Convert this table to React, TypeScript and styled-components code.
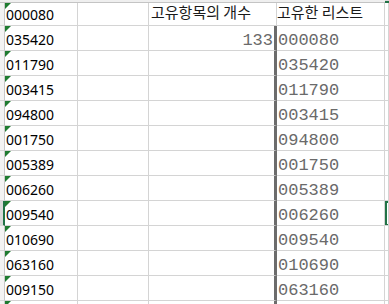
import * as React from 'react';
import styled, {createGlobalStyle, css} from 'styled-components';

const GRID = '#d4d4d4';
const ACTIVE = '#217346';
const COLUMNS = '5px 73px 71px 128px 108px 1fr';

const codes = [
    '000080', '035420', '011790', '003415', '094800', '001750',
    '005389', '006260', '009540', '010690', '063160', '009150',
];
const ACTIVE_ROW = 9;

export default function App() {
    return (
        <>
            <GlobalStyle/>
            <Sheet>
                <HeaderStrip>
                    <StripCell/>
                    <StripCell/>
                    <StripCell/>
                    <StripCell/>
                    <StripCell/>
                    <StripCell $active/>
                </HeaderStrip>
                {codes.map((code, i) => {
                    const rowNo = i + 1;
                    const first = rowNo === 1;
                    return (
                        <Row key={code} $height={first ? 23 : 25}>
                            <RowStub $active={rowNo === ACTIVE_ROW}/>
                            <TextCell>{code}</TextCell>
                            <Cell/>
                            {first
                                ? <HeaderCell>고유항목의 개수</HeaderCell>
                                : <CountCell $thick>{rowNo === 2 ? '133' : ''}</CountCell>}
                            {first
                                ? <HeaderCell $tight>고유한 리스트</HeaderCell>
                                : <MonoCell>{codes[i - 1]}</MonoCell>}
                            <Cell $selected={rowNo === ACTIVE_ROW}/>
                        </Row>
                    );
                })}
                {/* next row, only its top edge is in view */}
                <Row $height={25}>
                    <RowStub/>
                    <TextCell/>
                    <Cell/>
                    <Cell $thick/>
                    <Cell/>
                    <Cell/>
                </Row>
            </Sheet>
        </>
    );
}

const GlobalStyle = createGlobalStyle`
  html, body {
    margin: 0;
    padding: 0;
    background: #ffffff;
    overflow: hidden;
  }
`;

const Sheet = styled.div`
  width: 389px;
  height: 304px;
  overflow: hidden;
  background: #ffffff;
  font-family: "Noto Sans", "Noto Sans CJK KR", sans-serif;
  color: #000000;
`;

const HeaderStrip = styled.div`
  display: grid;
  grid-template-columns: ${COLUMNS};
  height: 3px;
`;

const StripCell = styled.div<{ $active?: boolean }>`
  box-sizing: border-box;
  background: #efefef;
  border-bottom: 1px solid #c4c4c4;
  ${p => p.$active && css`
    background: #d9d9d9;
    border-bottom: 2px solid ${ACTIVE};
  `}
`;

const Row = styled.div<{ $height: number }>`
  display: grid;
  grid-template-columns: ${COLUMNS};
  height: ${p => p.$height}px;
`;

const RowStub = styled.div<{ $active?: boolean }>`
  box-sizing: border-box;
  background: #f3f3f3;
  border-right: 1px solid #c8c8c8;
  border-bottom: 1px solid #d8d8d8;
  ${p => p.$active && css`
    background: #d9d9d9;
    border-right: 2px solid ${ACTIVE};
  `}
`;

const Cell = styled.div<{ $thick?: boolean; $selected?: boolean }>`
  position: relative;
  box-sizing: border-box;
  display: flex;
  align-items: flex-end;
  min-width: 0;
  white-space: nowrap;
  border-right: ${p => p.$thick ? '3px solid #6c6c6c' : `1px solid ${GRID}`};
  border-bottom: 1px solid ${GRID};
  ${p => p.$selected && css`
    box-shadow: inset 2px 0 0 ${ACTIVE}, inset 0 2px 0 ${ACTIVE}, inset 0 -1px 0 ${ACTIVE};
  `}
`;

const TextCell = styled(Cell)`
  padding: 0 0 2px 1px;
  font-size: 14px;
  line-height: 16px;

  &::before {
    content: '';
    position: absolute;
    left: 0;
    top: 0;
    border-top: 6px solid #1e7b30;
    border-right: 6px solid transparent;
  }
`;

const HeaderCell = styled(Cell)<{ $tight?: boolean }>`
  padding: 0 0 4px ${p => p.$tight ? 0 : 2}px;
  font-family: "Noto Sans CJK KR", sans-serif;
  font-size: 15px;
  line-height: 18px;
  color: #1a1a1a;
`;

const MonoCell = styled(Cell)`
  padding: 0 0 0 1px;
  font-family: "Liberation Mono", monospace;
  font-size: 17px;
  line-height: 18px;
  color: #6a6a6a;
`;

const CountCell = styled(MonoCell)`
  justify-content: flex-end;
  padding: 0 1px 0 0;
`;
